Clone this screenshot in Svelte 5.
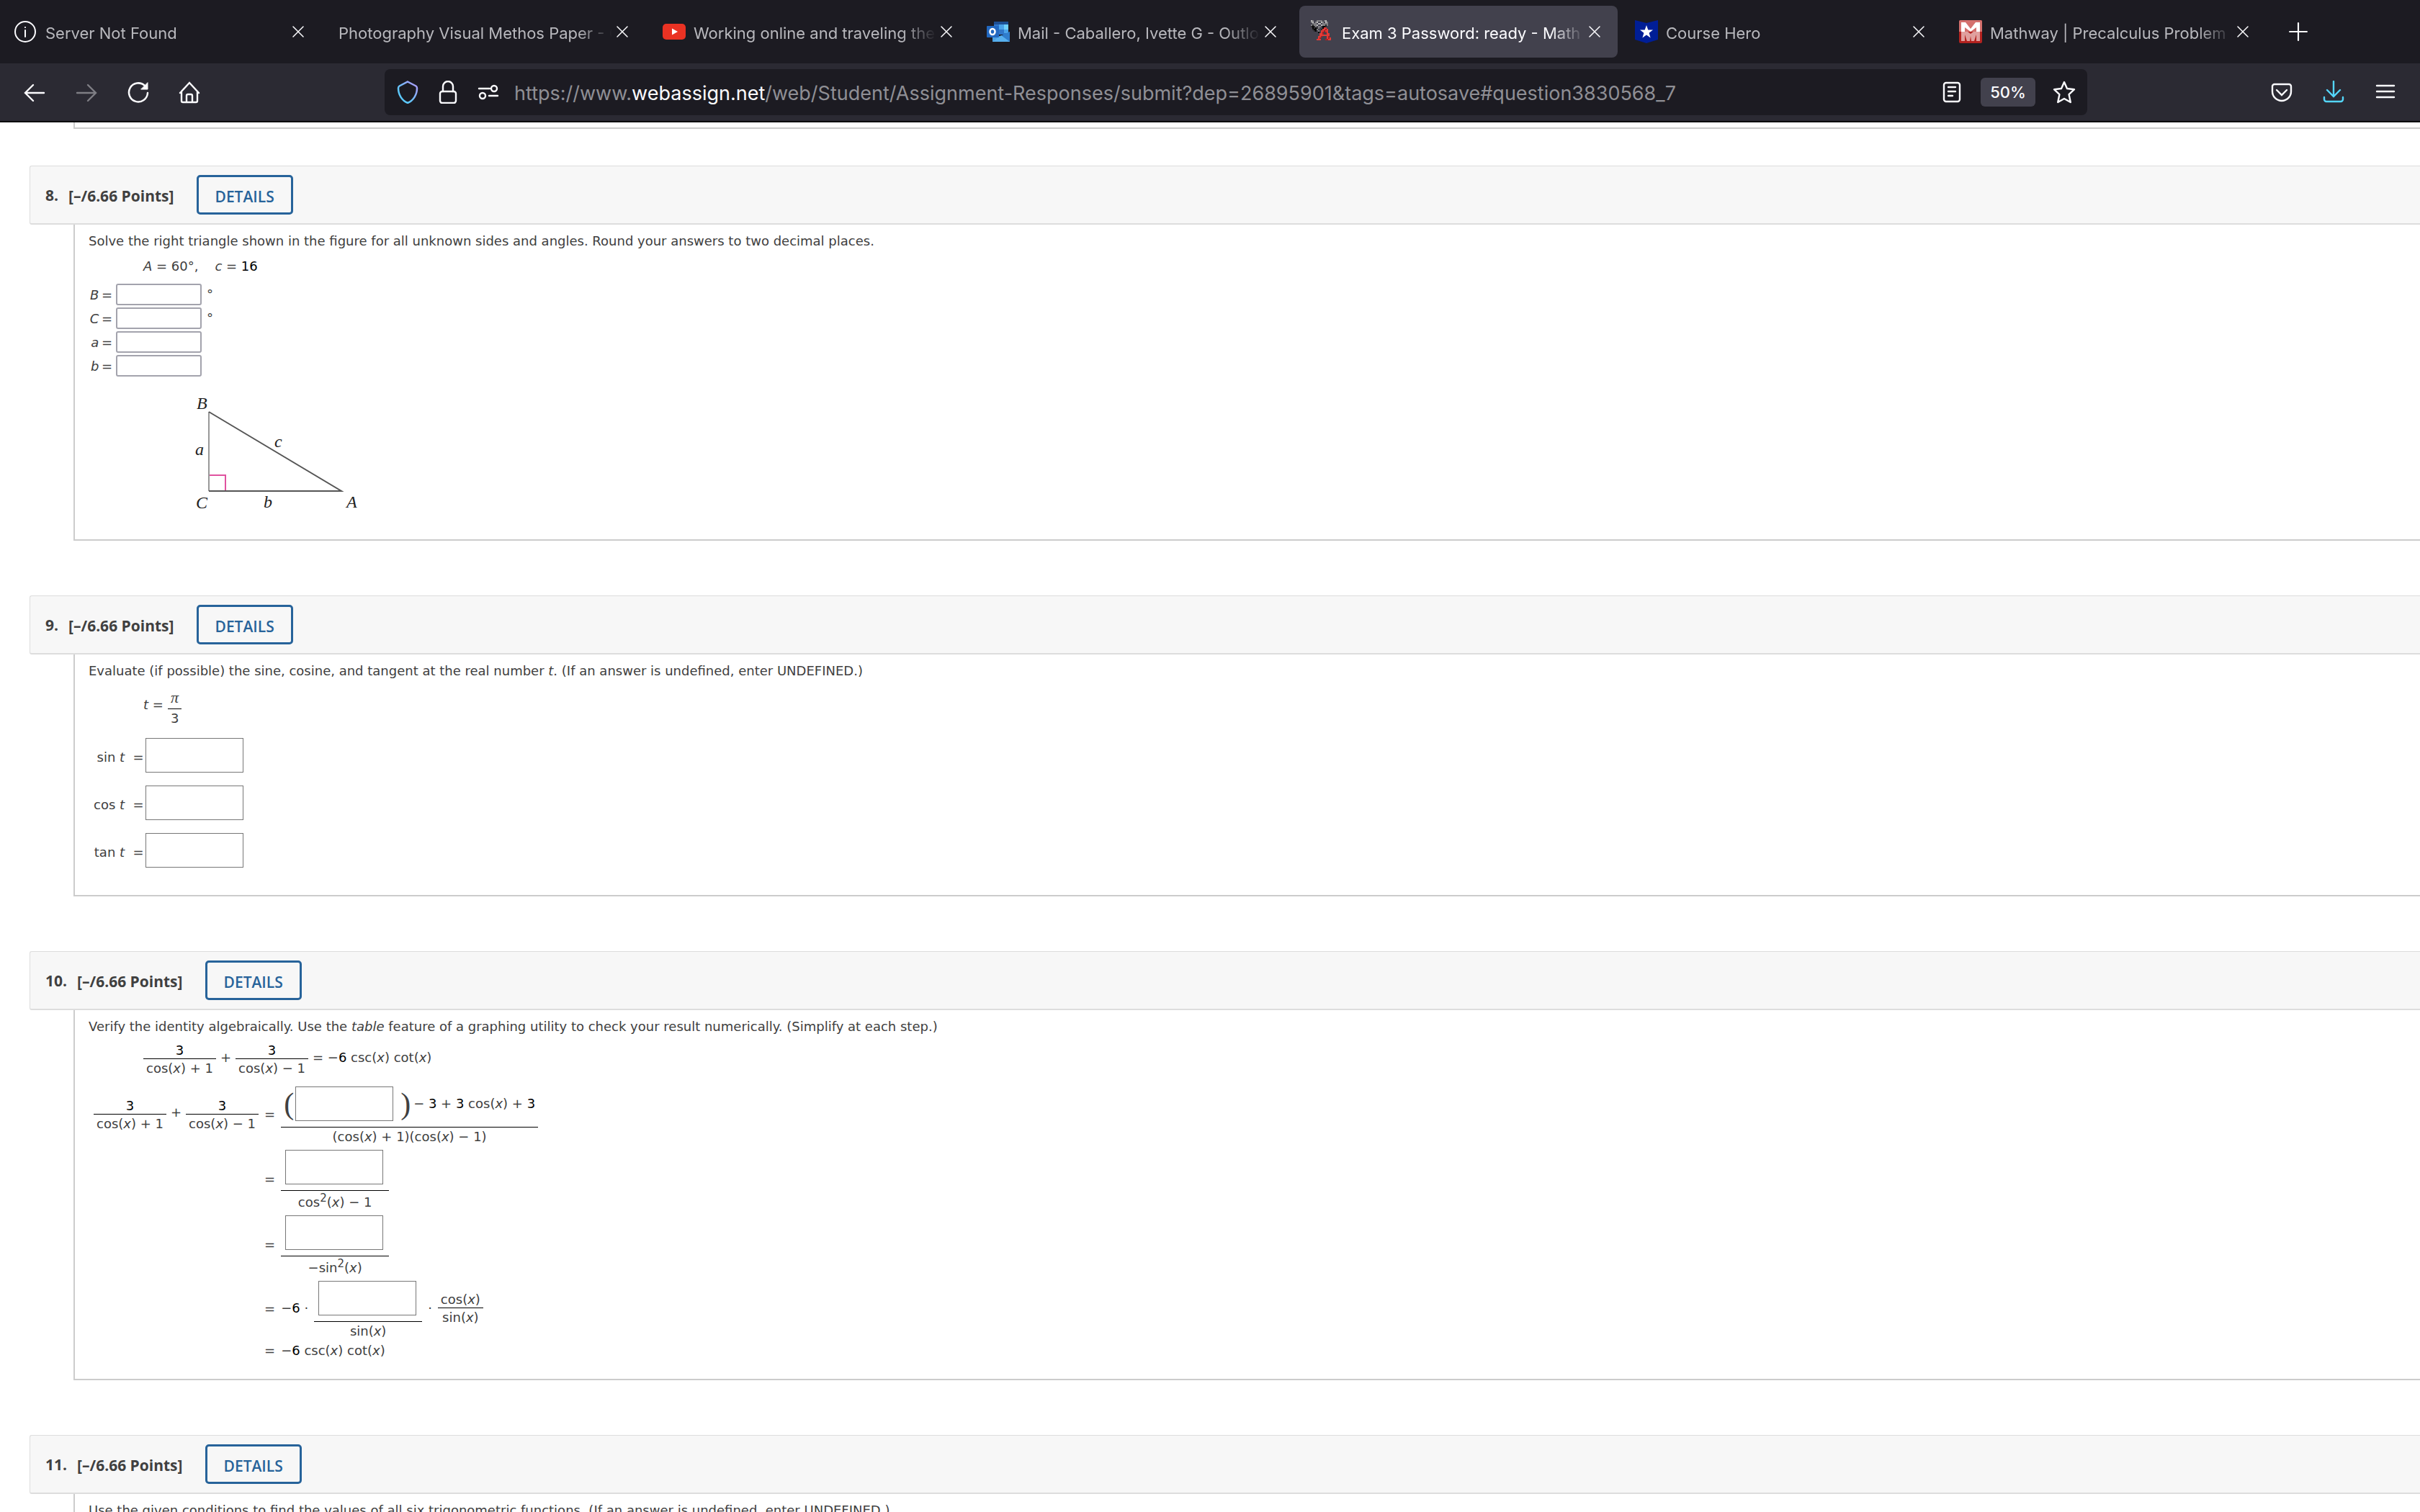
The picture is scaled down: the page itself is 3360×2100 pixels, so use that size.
<script>
    // browser tabs
    let tabs = $state([
        { id: 1, title: 'Server Not Found', icon: 'info', active: false },
        { id: 2, title: 'Photography Visual Methos Paper - Google Docs', icon: '', active: false },
        { id: 3, title: 'Working online and traveling the world', icon: 'youtube', active: false },
        { id: 4, title: 'Mail - Caballero, Ivette G - Outlook', icon: 'outlook', active: false },
        { id: 5, title: 'Exam 3 Password: ready - Math 1113', icon: 'webassign', active: true },
        { id: 6, title: 'Course Hero', icon: 'hero', active: false },
        { id: 7, title: 'Mathway | Precalculus Problem Solver', icon: 'mathway', active: false }
    ]);

    const triangleFields = [
        { name: 'B', unit: '°' },
        { name: 'C', unit: '°' },
        { name: 'a', unit: '' },
        { name: 'b', unit: '' }
    ];
    const trigFields = ['sin', 'cos', 'tan'];

    // WebAssign favicon, one letter per pixel
    const pixels = [
        'lg..gggg.gl...',
        'gl.gl..lg.lg..',
        '.ggg.ll.gggg..',
        'gdggl..lggdg..',
        'dkdg.gg.kkd...',
        '.kdkdg..krr...',
        '.dkkg..drrRr..',
        '..dk.g.rrRrr..',
        '.....k.rR.Rr..',
        '......rrR..rr.',
        '......rrrrrrr.',
        '.....rrR...rR.',
        '.....rR....rRr',
        '....rrr...RRrr'
    ];
    const colors = { l: '#b9b9b9', g: '#7f7f82', d: '#2a2a2c', k: '#050505', r: '#e23a36', R: '#a81f22' };

    function selectTab(id) {
        tabs = tabs.map(t => ({ ...t, active: t.id === id }));
    }

    function closeTab(id) {
        tabs = tabs.filter(t => t.id !== id);
    }
</script>

{#snippet favicon(name)}
    {#if name === 'info'}
        <svg class="icon" viewBox="0 0 32 32" fill="none" stroke="#fbfbfe" stroke-width="2">
            <circle cx="15" cy="16" r="14" />
            <path d="M15 14v9" stroke-linecap="round" />
            <circle cx="15" cy="10" r="0.7" fill="#fbfbfe" stroke-width="1" />
        </svg>
    {:else if name === 'youtube'}
        <svg class="icon" viewBox="0 0 32 32">
            <rect y="5" width="32" height="22" rx="5" fill="#ea3223" />
            <path d="M13 11.500l8 4.500-8 4.500z" fill="#fff" />
        </svg>
    {:else if name === 'outlook'}
        <svg class="icon" viewBox="0 0 32 32">
            <rect x="10" y="2" width="20" height="18" fill="#2f76c9" />
            <rect x="10" y="2" width="20" height="4" fill="#1d4f94" />
            <rect x="17" y="6" width="7" height="7" fill="#4aa3ea" />
            <rect x="24" y="6" width="6" height="7" fill="#6fd0fb" />
            <rect x="24" y="13" width="6" height="5" fill="#4aa3ea" />
            <path d="M8 18l12 5 12-7v14H8z" fill="#4aa0e4" />
            <path d="M19 22l13-6v14z" fill="#2f7dcc" />
            <path d="M8 30l12-9 12 9z" fill="#57b0ee" />
            <rect y="8" width="17" height="16" rx="1" fill="#2268c0" />
            <ellipse cx="8" cy="16" rx="3.500" ry="4" fill="none" stroke="#fff" stroke-width="2.500" />
        </svg>
    {:else if name === 'webassign'}
        <svg class="icon" viewBox="0 0 16 16" shape-rendering="crispEdges">
            {#each pixels as row, y}
                {#each row.split('') as p, x}
                    {#if p !== '.'}
                        <rect {x} {y} width="1" height="1" fill={colors[p]} />
                    {/if}
                {/each}
            {/each}
        </svg>
    {:else if name === 'hero'}
        <svg class="icon" viewBox="0 0 32 32">
            <path d="M0 0l16 4 16-4v27l-16 5-16-5z" fill="#001e96" />
            <path d="M16 7l2.300 6.500h6.700l-5.400 4.200 2 6.800-5.600-4-5.600 4 2-6.800L7 13.500h6.700z" fill="#fff" />
        </svg>
    {:else if name === 'mathway'}
        <svg class="icon" viewBox="0 0 32 32">
            <rect width="32" height="32" rx="2" fill="#b3221f" />
            <path d="M2 0h28a2 2 0 0 1 2 2v14H0V2a2 2 0 0 1 2-2z" fill="#d4706d" />
            <path d="M3 16V3h6l7 9 7-9h6v13h-5v-6l-8 6-8-6v6z" fill="#fff" />
            <path d="M3 16v13h5v-9l3 9h4l1-7 1 7h4l3-9v9h5V16h-9l-4 3-4-3z" fill="#e0a09e" />
        </svg>
    {/if}
{/snippet}

{#snippet header(number)}
    <header class="question-header">
        <span class="number">{number}.</span>
        <span class="points">[–/6.66 Points]</span>
        <button class="details">DETAILS</button>
    </header>
{/snippet}

{#snippet sumOfFractions()}
    <span class="frac"><span class="num"><b>3</b></span><span class="den">cos(<i>x</i>) + 1</span></span>
    <span class="op">+</span>
    <span class="frac"><span class="num"><b>3</b></span><span class="den">cos(<i>x</i>) − 1</span></span>
{/snippet}

<div class="window">
    <div class="tab-bar">
        {#each tabs as tab (tab.id)}
            <div class="tab" class:active={tab.active}>
                <button class="tab-title" onclick={() => selectTab(tab.id)}>
                    {@render favicon(tab.icon)}
                    <span class="tab-text">{tab.title}</span>
                </button>
                <button class="close" aria-label="Close tab" onclick={() => closeTab(tab.id)}>
                    <svg viewBox="0 0 16 16" stroke="#fbfbfe" stroke-width="1.500" stroke-linecap="round"><path d="M1 1l14 14M15 1L1 15" /></svg>
                </button>
            </div>
        {/each}
        <button class="new-tab" aria-label="New tab">
            <svg viewBox="0 0 24 24" stroke="#fbfbfe" stroke-width="2" stroke-linecap="round"><path d="M12 1v22M1 12h22" /></svg>
        </button>
    </div>

    <nav class="toolbar">
        <div class="nav-buttons">
            <button aria-label="Back">
                <svg class="icon" viewBox="0 0 32 32"><path d="M29 17H4M14 6L3 17l11 11" /></svg>
            </button>
            <button class="dim" aria-label="Forward">
                <svg class="icon" viewBox="0 0 32 32"><path d="M3 17h25M18 6l11 11-11 11" /></svg>
            </button>
            <button aria-label="Reload">
                <svg class="icon" viewBox="0 0 32 32"><path d="M25 7a13 13 0 1 0 4 10" stroke-width="2.500" /><path d="M29 3v9h-9z" fill="#fbfbfe" stroke-width="1" /></svg>
            </button>
            <button aria-label="Home">
                <svg class="icon" viewBox="0 0 32 32"><path d="M2 17L15 3l13 14M4 15v13a2 2 0 0 0 2 2h18a2 2 0 0 0 2-2V15M11 30V21a2 2 0 0 1 2-2h4a2 2 0 0 1 2 2v9" /></svg>
            </button>
        </div>
        <div class="url-bar">
            <button aria-label="Tracking protection">
                <svg class="icon" viewBox="0 0 32 32">
                    <defs>
                        <linearGradient id="shield" x1="0" y1="1" x2="1" y2="0">
                            <stop offset="0.300" stop-color="#5cc8fb" />
                            <stop offset="1" stop-color="#b597f8" />
                        </linearGradient>
                    </defs>
                    <path d="M16 1.500l11.500 6q1.500 1 1.500 3c0 9-5 17-13 20.500C8 27.500 3 19.500 3 10.500q0-2 1.500-3z" stroke="url(#shield)" stroke-width="2.500" />
                </svg>
            </button>
            <button aria-label="Connection secure">
                <svg class="icon" viewBox="0 0 32 32"><rect x="5" y="15" width="22" height="16" rx="3" /><path d="M9 15V8a7 7 0 0 1 14 0v7" /></svg>
            </button>
            <button aria-label="Site permissions">
                <svg class="icon" viewBox="0 0 32 32"><path d="M3 11h15M17 21h12" /><circle cx="24" cy="11" r="4" /><circle cx="8" cy="21" r="4" /></svg>
            </button>
            <div class="url" role="textbox" aria-label="Address" tabindex="0" contenteditable="true" spellcheck="false">https://www.<span>webassign.net</span>/web/Student/Assignment-Responses/submit?dep=26895901&amp;tags=autosave#question3830568_7</div>
            <button aria-label="Reader view">
                <svg class="icon" viewBox="0 0 32 32"><rect x="5" y="3" width="22" height="26" rx="3" /><path d="M11 9h10M11 15h10M11 21h6" /></svg>
            </button>
            <button class="zoom">50%</button>
            <button aria-label="Bookmark">
                <svg class="icon" viewBox="0 0 32 32"><path d="M16 2l4 9 10 1.200-7.400 7L24.800 30 16 25l-8.800 5 2.200-10.800L2 12.200 12 11z" stroke-linejoin="round" /></svg>
            </button>
        </div>
        <div class="side-buttons">
            <button aria-label="Pocket">
                <svg class="icon" viewBox="0 0 32 32"><path d="M6 5h20a3 3 0 0 1 3 3v7a13 13 0 0 1-26 0V8a3 3 0 0 1 3-3zM9 13l7 7 7-7" /></svg>
            </button>
            <button aria-label="Downloads">
                <svg class="icon download" viewBox="0 0 32 32"><path d="M16 1v20M7 13l9 9 9-9M3 23v3a3 3 0 0 0 3 3h20a3 3 0 0 0 3-3v-3" /></svg>
            </button>
            <button aria-label="Menu">
                <svg class="icon" viewBox="0 0 32 32"><path d="M4 7h24M4 15h24M4 23h24" /></svg>
            </button>
        </div>
    </nav>

    <main>
        <div class="question previous"><div class="body"></div></div>

        <section class="question">
            {@render header(8)}
            <div class="body">
                <p>Solve the right triangle shown in the figure for all unknown sides and angles. Round your answers to two decimal places.</p>
                <p class="given"><i>A</i> = 60°, &nbsp;&nbsp;&nbsp;<i>c</i> = <b>16</b></p>
                <div class="triangle-fields">
                    {#each triangleFields as f}
                        <label for="side-{f.name}"><i>{f.name}</i>&thinsp;=</label>
                        <input id="side-{f.name}" type="text" />
                        <span class="unit">{f.unit}</span>
                    {/each}
                </div>
                <svg class="figure" viewBox="0 0 256 190">
                    <path d="M34 125h23v22" stroke="#e0529f" />
                    <path d="M34 37v110" stroke="#999" />
                    <path d="M34 37l184 110H34" stroke="#555" />
                    <text x="17" y="33">B</text>
                    <text x="15" y="97">a</text>
                    <text x="125" y="86">c</text>
                    <text x="16" y="171">C</text>
                    <text x="110" y="170">b</text>
                    <text x="225" y="170">A</text>
                </svg>
            </div>
        </section>

        <section class="question">
            {@render header(9)}
            <div class="body">
                <p>Evaluate (if possible) the sine, cosine, and tangent at the real number <i>t</i>. (If an answer is undefined, enter UNDEFINED.)</p>
                <div class="math real-number">
                    <span class="op"><i>t</i> =</span>
                    <span class="frac"><span class="num pi">π</span><span class="den">3</span></span>
                </div>
                <div class="trig-fields">
                    {#each trigFields as name}
                        <label for="trig-{name}">{name} <i>t</i>&nbsp; =</label>
                        <input id="trig-{name}" class="answer" type="text" />
                    {/each}
                </div>
            </div>
        </section>

        <section class="question">
            {@render header(10)}
            <div class="body">
                <p>Verify the identity algebraically. Use the <i>table</i> feature of a graphing utility to check your result numerically. (Simplify at each step.)</p>
                <div class="math identity">
                    {@render sumOfFractions()}
                    <span class="op">= −<b>6</b> csc(<i>x</i>) cot(<i>x</i>)</span>
                </div>
                <div class="steps">
                    <div class="math lhs">{@render sumOfFractions()}</div>
                    <span class="equals">=</span>
                    <div class="math">
                        <span class="frac">
                            <span class="num filled">
                                <span class="paren open">(</span>
                                <input class="answer" type="text" aria-label="Step 1 numerator" />
                                <span class="paren">)</span>
                                <span>− <b>3</b> + <b>3</b> cos(<i>x</i>) + <b>3</b></span>
                            </span>
                            <span class="den">(cos(<i>x</i>) + 1)(cos(<i>x</i>) − 1)</span>
                        </span>
                    </div>

                    <span class="equals">=</span>
                    <div class="math">
                        <span class="frac">
                            <span class="num filled"><input class="answer" type="text" aria-label="Step 2 numerator" /></span>
                            <span class="den squared">cos<sup>2</sup>(<i>x</i>) − 1</span>
                        </span>
                    </div>

                    <span class="equals">=</span>
                    <div class="math">
                        <span class="frac">
                            <span class="num filled"><input class="answer" type="text" aria-label="Step 3 numerator" /></span>
                            <span class="den squared">−sin<sup>2</sup>(<i>x</i>)</span>
                        </span>
                    </div>

                    <span class="equals">=</span>
                    <div class="math product">
                        <span class="op">−<b>6</b> ·</span>
                        <span class="frac">
                            <span class="num filled"><input class="answer" type="text" aria-label="Step 4 numerator" /></span>
                            <span class="den">sin(<i>x</i>)</span>
                        </span>
                        <span class="op">·</span>
                        <span class="frac small"><span class="num">cos(<i>x</i>)</span><span class="den">sin(<i>x</i>)</span></span>
                    </div>

                    <span class="equals last">=</span>
                    <div class="last">−<b>6</b> csc(<i>x</i>) cot(<i>x</i>)</div>
                </div>
            </div>
        </section>

        <section class="question">
            {@render header(11)}
            <div class="body">
                <p>Use the given conditions to find the values of all six trigonometric functions. (If an answer is undefined, enter UNDEFINED.)</p>
            </div>
        </section>
    </main>
</div>

<style>
    :global(body) {
        margin: 0;
        background: #fff;
    }

    .window {
        height: 100vh;
        overflow: hidden;
        display: flex;
        flex-direction: column;
        font-family: Inter, sans-serif;
    }

    button {
        border: 0;
        padding: 0;
        background: none;
        color: inherit;
        font: inherit;
        cursor: pointer;
    }

    svg {
        display: block;
        fill: none;
    }

    .icon {
        width: 32px;
        height: 32px;
        flex: none;
    }

    /* tabs */
    .tab-bar {
        display: flex;
        align-items: center;
        height: 88px;
        flex: none;
        background: #1c1b22;
        color: #b8b8bd;
        font-size: 22px;
    }

    .tab {
        display: flex;
        align-items: center;
        flex: 0 1 442px;
        min-width: 0;
        height: 72px;
        margin: 0 4px;
        padding: 0 16px;
        box-sizing: border-box;
        border-radius: 8px;
    }

    .tab.active {
        background: #42414d;
        color: #fbfbfe;
    }

    .tab-title {
        display: flex;
        align-items: center;
        gap: 11px;
        flex: 1;
        min-width: 0;
        height: 100%;
    }

    .tab-text {
        flex: 1;
        padding-top: 4px;
        overflow: hidden;
        white-space: nowrap;
        text-align: left;
        line-height: 30px;
        mask-image: linear-gradient(to left, transparent, #000 48px);
    }

    .close {
        width: 30px;
        flex: none;
    }

    .close svg {
        width: 16px;
        margin-left: 6px;
    }

    .new-tab {
        margin-left: 28px;
    }

    .new-tab svg {
        width: 26px;
    }

    /* toolbar */
    .toolbar {
        display: flex;
        align-items: center;
        flex: none;
        height: 80px;
        background: #2b2a33;
        border-bottom: 2px solid #0c0c0d;
    }

    .toolbar .icon {
        stroke: #fbfbfe;
        stroke-width: 2.4;
        stroke-linecap: round;
    }

    .toolbar .download {
        stroke: #54d6fb;
    }

    .nav-buttons {
        display: flex;
        gap: 40px;
        width: 502px;
        padding-left: 32px;
    }

    .dim {
        opacity: 0.4;
    }

    .url-bar {
        display: flex;
        align-items: center;
        gap: 24px;
        flex: 1;
        min-width: 0;
        height: 64px;
        padding: 0 16px;
        border-radius: 8px;
        background: #1c1b22;
        color: #8f8f95;
    }

    .url {
        flex: 1;
        min-width: 0;
        margin-left: -4px;
        padding-top: 4px;
        overflow: hidden;
        white-space: nowrap;
        font-size: 27px;
        line-height: 36px;
        outline: none;
    }

    .url span {
        color: #fbfbfe;
    }

    .zoom {
        width: 76px;
        height: 40px;
        border-radius: 6px;
        background: #42414d;
        color: #fbfbfe;
        font-size: 22px;
        font-weight: 500;
    }

    .side-buttons {
        display: flex;
        justify-content: flex-end;
        gap: 40px;
        width: 430px;
        padding-right: 32px;
    }

    /* questions */
    main {
        flex: 1;
        min-height: 0;
        overflow: hidden;
        padding-left: 41px;
        color: #404040;
        font-family: "DejaVu Sans", Verdana, sans-serif;
        font-size: 18px;
        line-height: 22px;
    }

    .question {
        margin-bottom: 76px;
    }

    .question.previous {
        margin-bottom: 51px;
    }

    .previous .body {
        padding: 7px 0 0;
    }

    .question-header {
        display: flex;
        align-items: center;
        gap: 14px;
        height: 79px;
        padding-left: 21px;
        border: 1px solid #ddd;
        border-right: 0;
        border-bottom-width: 2px;
        border-radius: 3px 0 0 3px;
        background: #f7f7f7;
        font-family: "Open Sans", sans-serif;
        font-size: 21px;
        font-weight: 700;
    }

    .points {
        padding-top: 3px;
    }

    .details {
        height: 55px;
        margin-left: 17px;
        padding: 4px 23px 0;
        border: 3px solid #27639a;
        border-radius: 5px;
        background: #f7f7f7;
        color: #27639a;
        font-weight: 600;
    }

    .body {
        margin-left: 61px;
        padding: 12px 0 24px 19px;
        border-left: 2px solid #ccc;
        border-bottom: 2px solid #ccc;
    }

    p {
        margin: 0;
    }

    b {
        color: #000;
        font-weight: 400;
    }

    .given {
        margin: 13px 0 13px 76px;
    }

    input {
        width: 119px;
        height: 30px;
        box-sizing: border-box;
        padding: 0 4px;
        border: 2px solid #a3a3ad;
        border-radius: 3px;
        background: #fff;
        font: inherit;
    }

    .answer {
        width: 136px;
        height: 48px;
        border: 1px solid #777;
        border-radius: 0;
    }

    .triangle-fields {
        display: grid;
        grid-template-columns: 33px max-content max-content;
        align-items: center;
        gap: 3px 5px;
    }

    .triangle-fields label {
        padding-top: 2px;
        text-align: right;
    }

    .unit {
        padding-left: 2px;
    }

    .figure {
        width: 256px;
        height: 190px;
        margin: 12px 0 0 133px;
        stroke-width: 2;
    }

    .figure text {
        fill: #222;
        font: italic 24px "Liberation Serif", serif;
    }

    /* fractions */
    .math {
        display: flex;
        align-items: center;
        gap: 6px;
    }

    .op {
        padding-bottom: 6px;
        white-space: nowrap;
    }

    .frac {
        display: flex;
        flex-direction: column;
        text-align: center;
    }

    .num {
        padding: 0 4px;
    }

    .den {
        padding: 2px 4px 0;
        border-top: 1px solid #000;
    }

    .squared {
        padding-top: 5px;
    }

    sup {
        font-size: 15px;
        line-height: 0;
        vertical-align: 7px;
    }

    .pi {
        padding-bottom: 4px;
        font-family: "Liberation Serif", serif;
        font-size: 22px;
        font-style: italic;
    }

    .real-number {
        margin: 15px 0 16px 76px;
    }

    .real-number .op {
        padding-bottom: 10px;
    }

    .trig-fields {
        display: grid;
        grid-template-columns: max-content max-content;
        align-items: center;
        gap: 18px 2px;
        padding: 0 0 14px 7px;
    }

    .trig-fields label {
        padding-top: 5px;
        text-align: right;
    }

    .identity {
        margin: 11px 0 14px 76px;
    }

    .steps {
        display: grid;
        grid-template-columns: max-content max-content max-content;
        align-items: center;
        gap: 7px 8px;
        padding: 0 0 6px 7px;
    }

    .lhs {
        padding-bottom: 3px;
    }

    .equals {
        grid-column: 2;
        padding-bottom: 3px;
    }

    .last {
        padding: 0;
        line-height: 18px;
    }

    .product {
        gap: 8px;
    }

    .filled {
        display: flex;
        align-items: center;
        padding: 0 4px 8px;
    }

    .filled input {
        margin: 0 4px 0 2px;
    }

    .paren {
        padding: 0 4px 0 6px;
        font: 42px/48px "Liberation Serif", serif;
    }

    .paren.open {
        padding: 0;
    }

    .small {
        padding-bottom: 5px;
    }
</style>
